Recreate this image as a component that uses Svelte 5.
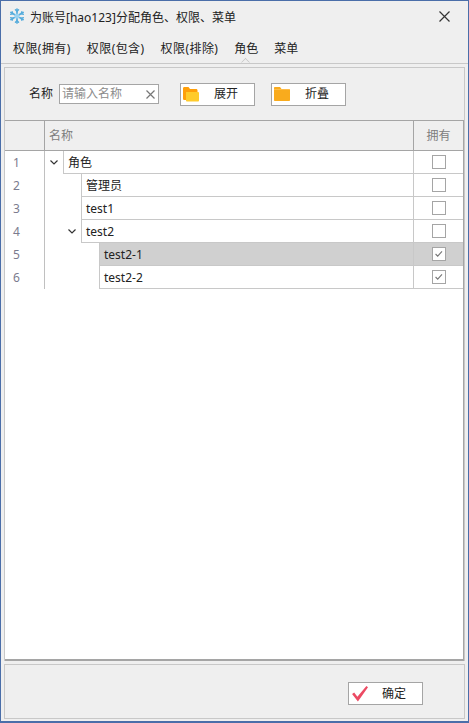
<script>
  const tabs = ['权限(拥有)', '权限(包含)', '权限(排除)', '角色', '菜单'];
  const rows = [
    { name: '角色', level: 0, arrow: true, checked: false },
    { name: '管理员', level: 1, arrow: false, checked: false },
    { name: 'test1', level: 1, arrow: false, checked: false },
    { name: 'test2', level: 1, arrow: true, checked: false },
    { name: 'test2-1', level: 2, arrow: false, checked: true, selected: true },
    { name: 'test2-2', level: 2, arrow: false, checked: true }
  ];
</script>

<div class="win">
  <header class="title">
    <svg class="logo" viewBox="0 0 16 16" width="16" height="16">
      <g stroke="#55acdc" stroke-width="1.7" fill="none" stroke-linecap="round">
        <path d="M8 1v14M1.900 4.500l12.200 7M1.900 11.500l12.200-7" />
        <path d="M6.400 1.800 8 3.400l1.600-1.600M6.400 14.200 8 12.600l1.600 1.600M1.600 6.400l2.200-.6-.6-2.200M14.400 9.600l-2.200.6.6 2.200M1.600 9.600l2.200.6-.6 2.200M14.400 6.400l-2.200-.6.6-2.200" stroke-width="1.300" />
      </g>
      <circle cx="8" cy="8" r="2.600" fill="#9ad2f0" />
    </svg>
    <span class="title-text">为账号[hao123]分配角色、权限、菜单</span>
    <svg class="close" viewBox="0 0 11 11" width="11" height="11">
      <path d="M.5.5l10 10M10.500.5l-10 10" stroke="#333" stroke-width="1.200" fill="none" />
    </svg>
  </header>

  <nav class="tabs">
    {#each tabs as t, i}
      <span class="tab" class:wide={i < 3}>{t}{#if i === 3}<i class="notch"></i>{/if}</span>
    {/each}
  </nav>

  <section class="panel main">
    <div class="toolbar">
      <span class="label">名称</span>
      <div class="input">
        <span class="ph">请输入名称</span>
        <svg viewBox="0 0 9 9" width="9" height="9"><path d="M.5.5l8 8M8.500.5l-8 8" stroke="#777" stroke-width="1.200" fill="none" /></svg>
      </div>
      <button class="btn first">
        <svg viewBox="0 0 16 16" width="16" height="16">
          <path d="M0 2.500C0 1.500.5 1 1.500 1h4l1.500 2H13c1 0 1.500.5 1.500 1.500V6H0z" fill="#ff9f0a" />
          <path d="M0 4h14v10H1.500C.5 14 0 13.500 0 12.500z" fill="#ff9f0a" />
          <path d="M3 6h12c.5 0 1 .5 1 1v7.500c0 .5-.5 1-1 1H4c-.5 0-1-.5-1-1z" fill="#ffcb2b" />
        </svg>
        <span>展开</span>
      </button>
      <button class="btn second">
        <svg viewBox="0 0 16 16" width="16" height="16">
          <path d="M0 2c0-.6.4-1 1-1h5l1.500 2H15c.6 0 1 .4 1 1v10c0 .6-.4 1-1 1H1c-.6 0-1-.4-1-1z" fill="#f9ab1d" />
          <path d="M0 3.500h16" stroke="#ffc766" stroke-width=".6" />
        </svg>
        <span>折叠</span>
      </button>
    </div>

    <div class="grid">
      <div class="head">
        <div class="c-num"></div>
        <div class="c-name">名称</div>
        <div class="c-own">拥有</div>
      </div>
      {#each rows as r, i}
        <div class="row" class:selected={r.selected}>
          <div class="c-num">{i + 1}</div>
          <div class="tree">
            <div class="indent" style:width="{r.level * 18}px"></div>
            <div class="arrow">
              {#if r.arrow}
                <svg viewBox="0 0 8 5" width="8" height="5"><path d="M.5.5 4 4 7.500.5" stroke="#333" stroke-width="1.200" fill="none" /></svg>
              {/if}
            </div>
            <div class="cell">{r.name}</div>
          </div>
          <div class="c-check">
            <span class="box">
              {#if r.checked}
                <svg viewBox="0 0 14 14" width="12" height="12"><path d="M3 7l2.500 2.500L10.500 4" stroke="#777" stroke-width="1.300" fill="none" /></svg>
              {/if}
            </span>
          </div>
        </div>
      {/each}
    </div>
  </section>

  <footer class="panel foot">
    <button class="btn ok">
      <svg viewBox="0 0 16 16" width="17" height="17">
        <path d="M1 8.500 3 7l3 4L14.500 1 16 2 6.500 15.500z" fill="#ec4a63" />
      </svg>
      <span>确定</span>
    </button>
  </footer>
</div>

<style>
  :global(body) {
    margin: 0;
    background: #efefef;
  }
  .win {
    box-sizing: border-box;
    width: 469px;
    height: 723px;
    border: 1px solid #4a6ea9;
    border-width: 1px 1px 2px 1px;
    background: #efefef;
    display: flex;
    flex-direction: column;
    overflow: hidden;
    font: 12px/16px "Noto Sans", "Noto Sans CJK SC", sans-serif;
    color: #222;
  }
  .title {
    height: 34px;
    display: flex;
    align-items: center;
    padding: 0 18px 0 8px;
    flex: none;
  }
  .logo { margin-bottom: 4px; }
  .close { margin-bottom: 4px; }
  .title-text { margin-left: 5px; flex: 1; white-space: nowrap; }
  .tabs {
    height: 29px;
    display: flex;
    align-items: center;
    padding: 0 4px;
    box-sizing: border-box;
    border-bottom: 1px solid #c8c8c8;
    flex: none;
  }
  .tab { padding: 0 8px; position: relative; white-space: nowrap; }
  .tab.wide { letter-spacing: .43px; }
  .notch {
    position: absolute;
    left: 50%;
    top: calc(100% + 2px);
    width: 7px;
    height: 7px;
    margin-left: -4px;
    background: #efefef;
    border: 1px solid #c8c8c8;
    border-width: 1px 0 0 1px;
    box-sizing: border-box;
    transform: rotate(45deg);
    clip-path: polygon(0 0, 100% 0, 0 100%);
  }
  .panel {
    box-sizing: border-box;
    margin: 3px 3px 0;
    border: 1px solid #c8c8c8;
  }
  .main {
    flex: 1;
    min-height: 0;
    display: flex;
    flex-direction: column;
    border-bottom: 0;
  }
  .toolbar {
    height: 52px;
    display: flex;
    align-items: center;
    padding-left: 24px;
    flex: none;
  }
  .label { margin-right: 6px; }
  .input {
    box-sizing: border-box;
    width: 100px;
    height: 20px;
    background: #fff;
    border: 1px solid #a5a5a5;
    display: flex;
    align-items: center;
    justify-content: space-between;
    padding: 0 3px 0 2px;
    margin-right: 21px;
  }
  .ph { color: #8c8c8c; }
  .btn {
    box-sizing: border-box;
    width: 75px;
    height: 23px;
    padding: 0 0 0 2px;
    background: #fff;
    border: 1px solid #a5a5a5;
    display: flex;
    align-items: center;
    font: inherit;
    color: inherit;
  }
  .btn span { margin-left: 15px; }
  .first { margin-right: 16px; }
  .grid {
    flex: 1;
    min-height: 0;
    background: #fff;
    border: 1px solid #a5a5a5;
    border-width: 1px 1px 2px 0;
  }
  .head {
    height: 29px;
    background: #efefef;
    border-bottom: 1px solid #a5a5a5;
    display: flex;
    color: #7d7d7d;
  }
  .c-num {
    box-sizing: border-box;
    width: 40px;
    flex: none;
    border-right: 1px solid #a5a5a5;
  }
  .c-name {
    flex: 1;
    line-height: 29px;
    padding-left: 4px;
  }
  .c-own {
    box-sizing: border-box;
    width: 50px;
    flex: none;
    border-left: 1px solid #a5a5a5;
    text-align: center;
    line-height: 29px;
  }
  .row {
    height: 23px;
    display: flex;
  }
  .row .c-num {
    color: #7b7b8e;
    line-height: 24px;
    padding-left: 8px;
    border-right: 1px solid #c0c0c0;
    background: #fff;
  }
  .tree { flex: 1; display: flex; min-width: 0; }
  .indent { flex: none; }
  .arrow {
    width: 18px;
    flex: none;
    display: flex;
    align-items: center;
    justify-content: center;
  }
  .cell {
    flex: 1;
    box-sizing: border-box;
    border-left: 1px solid #c8c8c8;
    border-bottom: 1px solid #c8c8c8;
    line-height: 24px;
    padding-left: 4px;
  }
  .c-check {
    box-sizing: border-box;
    width: 50px;
    flex: none;
    border-left: 1px solid #c8c8c8;
    border-bottom: 1px solid #c8c8c8;
    display: flex;
    align-items: center;
    justify-content: center;
  }
  .box {
    box-sizing: border-box;
    width: 14px;
    height: 14px;
    border: 1px solid #a5a5a5;
    background: #fff;
    display: flex;
    align-items: center;
    justify-content: center;
  }
  .selected .cell, .selected .c-check { background: #d0d0d0; }
  .foot {
    flex: none;
    height: 55px;
    margin-top: 3px;
    margin-bottom: 2px;
    display: flex;
    justify-content: flex-end;
    align-items: center;
    padding-right: 41px;
    padding-top: 3px;
  }
  .ok span { margin-left: 14px; padding-top: 1px; }
</style>
